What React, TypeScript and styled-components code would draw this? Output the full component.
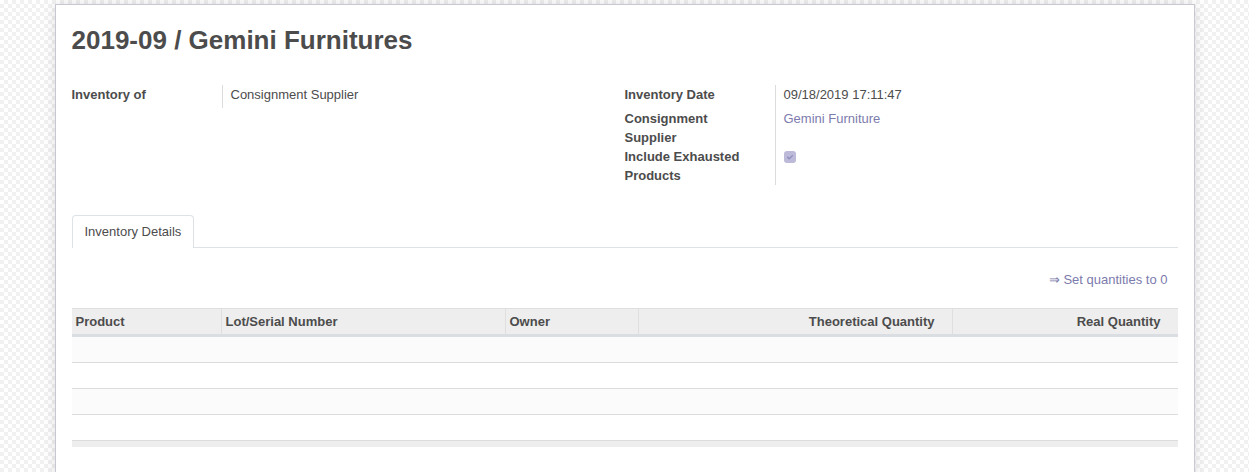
import React from "react";
import styled, { createGlobalStyle } from "styled-components";

const Global = createGlobalStyle`
  html, body { margin: 0; padding: 0; }
  body {
    font-family: "Liberation Sans", Arial, sans-serif;
    font-size: 13px;
    color: #4c4c4c;
    background-color: #ffffff;
    background-image:
      linear-gradient(45deg, #f1f1f1 25%, transparent 25%, transparent 75%, #f1f1f1 75%),
      linear-gradient(45deg, #f1f1f1 25%, transparent 25%, transparent 75%, #f1f1f1 75%);
    background-size: 8px 8px;
    background-position: 0 0, 4px 4px;
    overflow: hidden;
  }
`;

const Sheet = styled.div`
  box-sizing: border-box;
  width: 1140px;
  min-height: 480px;
  margin: 4px auto 0;
  background: #fff;
  border: 1px solid #c8c8d3;
  box-shadow: 0 0 12px rgba(0, 0, 0, 0.13);
  padding: 20px 16px 0;
`;

const Title = styled.h1`
  margin: 0 0 29px;
  font-size: 26px;
  line-height: 31px;
  font-weight: bold;
  color: #4c4c4c;
`;

const Groups = styled.div`
  display: grid;
  grid-template-columns: 1fr 1fr;
`;

const Group = styled.div`
  display: flex;
  flex-direction: column;
`;

const Row = styled.div<{ $h?: number }>`
  display: grid;
  grid-template-columns: 151px 1fr;
  min-height: ${(p) => (p.$h ? `${p.$h}px` : "auto")};
  line-height: 19px;
`;

const Label = styled.div`
  font-weight: bold;
  border-right: 1px solid #dcdcdc;
  padding-right: 16px;
`;

const Value = styled.div<{ $link?: boolean }>`
  padding-left: 8px;
  color: ${(p) => (p.$link ? "#7c7bad" : "#4c4c4c")};
`;

const Check = styled.span`
  display: inline-block;
  width: 12px;
  height: 12px;
  margin-top: 4px;
  border-radius: 3px;
  background: #bcbad8;
  position: relative;
  vertical-align: top;
`;

const Tabs = styled.div`
  display: flex;
  margin-top: 30px;
  border-bottom: 1px solid #dee2e6;
`;

const Tab = styled.div`
  padding: 0 12px 1px;
  height: 31px;
  line-height: 32px;
  border: 1px solid #dee2e6;
  border-bottom: none;
  border-radius: 4px 4px 0 0;
  background: #fff;
  margin-bottom: -1px;
  color: #4c4c4c;
`;

const ActionBar = styled.div`
  display: flex;
  justify-content: flex-end;
  padding-top: 22px;
  margin-bottom: 18px;
`;

const LinkButton = styled.span`
  color: #7c7bad;
  line-height: 20px;
  padding-right: 10px;
`;

const Table = styled.div`
  border-top: 1px solid #dedede;
`;

const HeadRow = styled.div`
  display: grid;
  grid-template-columns: 150px 284px 133px 314px 1fr;
  background: #eeeeee;
  border-bottom: 3px solid #dadde2;
`;

const HeadCell = styled.div<{ $right?: boolean; $last?: boolean }>`
  font-weight: bold;
  height: 25px;
  line-height: 25px;
  padding: 0 ${(p) => (p.$right ? "17px" : "4px")} 0 4px;
  text-align: ${(p) => (p.$right ? "right" : "left")};
  border-right: ${(p) => (p.$last ? "none" : "1px solid #dfdfdf")};
`;

const BodyRow = styled.div<{ $odd?: boolean }>`
  height: 25px;
  background: ${(p) => (p.$odd ? "#fbfbfb" : "#ffffff")};
  border-bottom: 1px solid #dcdcdc;
`;

const Foot = styled.div`
  height: 6px;
  background: #eeeeee;
`;

export default function App() {
  return (
    <>
      <Global />
      <Sheet>
        <Title>2019-09 / Gemini Furnitures</Title>
        <Groups>
          <Group>
            <Row $h={23}>
              <Label>Inventory of</Label>
              <Value>Consignment Supplier</Value>
            </Row>
          </Group>
          <Group>
            <Row $h={24}>
              <Label>Inventory Date</Label>
              <Value>09/18/2019 17:11:47</Value>
            </Row>
            <Row>
              <Label>Consignment Supplier</Label>
              <Value $link>Gemini Furniture</Value>
            </Row>
            <Row>
              <Label>Include Exhausted Products</Label>
              <Value>
                <Check>
                  <svg width="12" height="12" viewBox="0 0 12 12" style={{ position: "absolute", left: 0, top: 0 }}>
                    <path d="M3.6 6.3 L5.2 7.8 L8.4 4.6" fill="none" stroke="#8e8cbd" strokeWidth="1.3" strokeLinecap="round" strokeLinejoin="round" />
                  </svg>
                </Check>
              </Value>
            </Row>
          </Group>
        </Groups>
        <Tabs>
          <Tab>Inventory Details</Tab>
        </Tabs>
        <ActionBar>
          <LinkButton>⇒ Set quantities to 0</LinkButton>
        </ActionBar>
        <Table>
          <HeadRow>
            <HeadCell>Product</HeadCell>
            <HeadCell>Lot/Serial Number</HeadCell>
            <HeadCell>Owner</HeadCell>
            <HeadCell $right>Theoretical Quantity</HeadCell>
            <HeadCell $right $last>Real Quantity</HeadCell>
          </HeadRow>
          <BodyRow $odd />
          <BodyRow />
          <BodyRow $odd />
          <BodyRow />
          <Foot />
        </Table>
      </Sheet>
    </>
  );
}
